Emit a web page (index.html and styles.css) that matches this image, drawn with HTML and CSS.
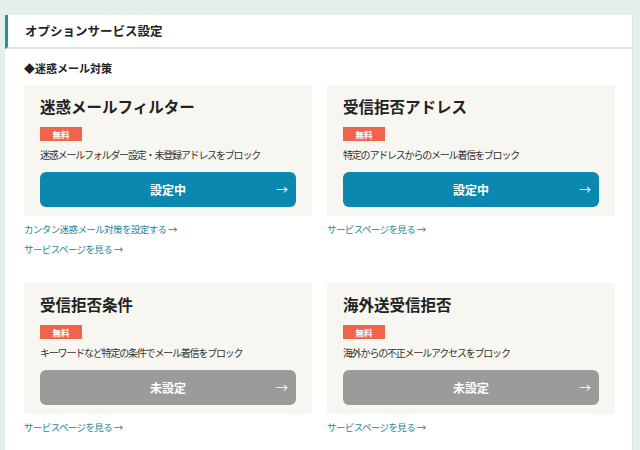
FILE: index.html
```html
<!DOCTYPE html>
<html lang="ja">
<head>
<meta charset="utf-8">
<title>オプションサービス設定</title>
<link rel="stylesheet" href="styles.css">
</head>
<body>
<div class="panel">
  <h1 class="panel-title">オプションサービス設定</h1>
  <div class="panel-body">
    <h2 class="section-title">◆迷惑メール対策</h2>
    <div class="grid">
      <div class="col">
        <div class="card">
          <h3 class="card-title">迷惑メールフィルター</h3>
          <span class="badge">無料</span>
          <p class="desc">迷惑メールフォルダー設定・未登録アドレスをブロック</p>
          <a class="btn btn-on" href="#"><span>設定中</span><span class="arrow">→</span></a>
        </div>
        <a class="link" href="#">カンタン迷惑メール対策を設定する →</a>
        <a class="link" href="#">サービスページを見る →</a>
      </div>
      <div class="col">
        <div class="card">
          <h3 class="card-title">受信拒否アドレス</h3>
          <span class="badge">無料</span>
          <p class="desc">特定のアドレスからのメール着信をブロック</p>
          <a class="btn btn-on" href="#"><span>設定中</span><span class="arrow">→</span></a>
        </div>
        <a class="link" href="#">サービスページを見る →</a>
      </div>
      <div class="col">
        <div class="card">
          <h3 class="card-title">受信拒否条件</h3>
          <span class="badge">無料</span>
          <p class="desc">キーワードなど特定の条件でメール着信をブロック</p>
          <a class="btn btn-off" href="#"><span>未設定</span><span class="arrow">→</span></a>
        </div>
        <a class="link" href="#">サービスページを見る →</a>
      </div>
      <div class="col">
        <div class="card">
          <h3 class="card-title">海外送受信拒否</h3>
          <span class="badge">無料</span>
          <p class="desc">海外からの不正メールアクセスをブロック</p>
          <a class="btn btn-off" href="#"><span>未設定</span><span class="arrow">→</span></a>
        </div>
        <a class="link" href="#">サービスページを見る →</a>
      </div>
    </div>
  </div>
</div>
</body>
</html>
```
FILE: styles.css
```css
* { box-sizing: border-box; }
html, body { margin: 0; padding: 0; }
body {
  background: #e6eded;
  font-family: "Noto Sans CJK JP", "Noto Sans", sans-serif;
  color: #222;
  padding: 15px 7px 0 5px;
  height: 450px;
  overflow: hidden;
}
.panel {
  background: #fff;
  min-height: 435px;
  border-right: 1px solid #dde3e3;
}
.panel-title {
  margin: 0;
  height: 34px;
  line-height: 32px;
  font-size: 12.5px;
  font-weight: bold;
  padding-left: 17px;
  border-left: 3px solid #1b93a3;
  border-bottom: 2px solid #e2e2e2;
  color: #222;
}
.panel-body {
  padding: 0 18px 0 19px;
}
.section-title {
  margin: 11px 0 9px;
  font-size: 11px;
  line-height: 16px;
  font-weight: bold;
}
.grid {
  display: grid;
  grid-template-columns: 288px 288px;
  column-gap: 15px;
  row-gap: 27px;
}
.col {
  display: flex;
  flex-direction: column;
  align-items: flex-start;
}
.card {
  align-self: stretch;
  background: #f7f6f0;
  padding: 10px 16px 9px;
  display: flex;
  flex-direction: column;
  align-items: flex-start;
}
.card-title {
  margin: 0;
  font-size: 15.5px;
  line-height: 22px;
  font-weight: bold;
  color: #222;
}
.badge {
  margin-top: 10px;
  width: 42px;
  height: 14px;
  line-height: 14px;
  background: #f0644c;
  color: #fff;
  font-size: 8.5px;
  font-weight: bold;
  text-align: center;
}
.desc {
  margin: 7px 0 0;
  font-size: 10px;
  line-height: 14px;
  letter-spacing: -1.2px;
  color: #333;
}
.btn {
  margin-top: 10px;
  align-self: stretch;
  height: 35px;
  border-radius: 6px;
  display: flex;
  align-items: center;
  justify-content: center;
  position: relative;
  color: #fff;
  font-size: 12px;
  font-weight: bold;
  text-decoration: none;
}
.btn-on { background: #0a88b0; }
.btn-off { background: #9b9b9b; }
.arrow {
  position: absolute;
  right: 8px;
  top: 50%;
  transform: translateY(-55%);
  font-weight: normal;
  font-size: 12px;
}
.link {
  margin-top: 6px;
  font-size: 9.5px;
  line-height: 14px;
  letter-spacing: -0.6px;
  color: #2a8497;
  text-decoration: none;
}
```
